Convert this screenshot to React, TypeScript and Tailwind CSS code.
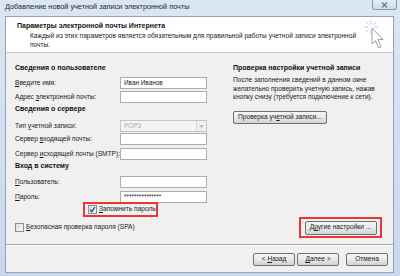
import React from "react";

function Btn({ children, className = "" }: { children: React.ReactNode; className?: string }) {
  return (
    <div
      className={`flex h-[13px] items-center justify-center whitespace-nowrap rounded-[2px] border border-[#707070] bg-linear-to-b from-[#f6f6f6] via-[#e9e9e9] to-[#d3d3d3] text-[6.6px] leading-none text-[#1a1a1a] ${className}`}
    >
      {children}
    </div>
  );
}

function Field({ label, value, disabled }: { label: React.ReactNode; value?: string; disabled?: boolean }) {
  return (
    <div className="flex h-[12px] items-center">
      <div className="w-[105px] whitespace-nowrap text-[6.6px] leading-none text-[#1a1a1a]">{label}</div>
      {disabled ? (
        <div className="flex h-full w-[87px] items-center border border-[#bcc6d2] bg-[#f4f4f4]">
          <span className="flex-1 pl-[3px] text-[6.4px] leading-none text-[#a8a8a8]">{value}</span>
          <div className="flex h-full w-[10px] items-center justify-center border-l border-[#d4d9df] bg-[#eef0f2]">
            <svg width="5" height="3" viewBox="0 0 5 3">
              <path d="M0 0 L5 0 L2.5 3 Z" fill="#b8b8b8" />
            </svg>
          </div>
        </div>
      ) : (
        <div className="flex h-full w-[87px] items-center border border-[#abadb3] bg-white pl-[3px] text-[6.4px] leading-none text-[#1a1a1a]">
          {value}
        </div>
      )}
    </div>
  );
}

function Check({ checked }: { checked?: boolean }) {
  return (
    <div className="flex h-[9px] w-[9px] shrink-0 items-center justify-center border border-[#8e8f8f] bg-linear-to-br from-[#dcdcdc] to-[#fbfbfb]">
      {checked && (
        <svg width="7" height="7" viewBox="0 0 7 7">
          <path d="M1 3.6 L2.8 5.6 L6 1" stroke="#2a3f7a" strokeWidth="1.3" fill="none" />
        </svg>
      )}
    </div>
  );
}

function U({ children }: { children: React.ReactNode }) {
  return <span className="underline underline-offset-1">{children}</span>;
}

export default function App() {
  return (
    <div className="flex h-[276px] w-[400px] flex-col overflow-hidden bg-linear-to-b from-[#dbe6f3] to-[#c9d8ea] font-['Liberation_Sans',Arial,sans-serif]">
      {/* title bar */}
      <div className="flex h-[16px] items-start">
        <div className="whitespace-nowrap pl-[5px] pt-[2px] text-[7.3px] leading-[9px] text-[#1e2530]">
          Добавление новой учетной записи электронной почты
        </div>
        <div className="ml-auto mr-[3px] flex h-[10px] w-[25px] items-center justify-center rounded-b-[3px] border border-t-0 border-[#8a9ab0] bg-linear-to-b from-[#e6edf5] to-[#cfdae8]">
          <svg width="7" height="6" viewBox="0 0 7 6">
            <path d="M1 0.5 L6 5.5 M6 0.5 L1 5.5" stroke="#6b7688" strokeWidth="1.2" />
          </svg>
        </div>
      </div>

      {/* client area */}
      <div className="ml-[5px] mr-[6px] flex flex-1 flex-col border border-[#91a4bd] bg-[#f0f0f0]">
        {/* header */}
        <div className="relative h-[36px] border-b border-[#c9c9c9] bg-white pl-[11px] pt-[4px]">
          <div className="h-[10px] whitespace-nowrap text-[7px] font-bold leading-[10px] text-[#111]">
            Параметры электронной почты Интернета
          </div>
          <div className="whitespace-nowrap pl-[13px] text-[6.6px] leading-[9px] text-[#222]">
            Каждый из этих параметров является обязательным для правильной работы учетной записи электронной
            <br />
            почты.
          </div>
          <svg className="absolute right-[6px] top-[2px]" width="24" height="32" viewBox="0 0 24 32">
            <g stroke="#c8ccd2" strokeWidth="1">
              <path d="M8 1 V6 M8 11 V15 M1 8 H5 M11 8 H15 M3 3 L5.5 5.5 M13 3 L10.5 5.5 M3 13 L5.5 10.5" />
            </g>
            <path
              d="M9 9 L9 25 L12.5 21.5 L15.5 29 L18 28 L15 20.5 L20 20.5 Z"
              fill="#ffffff"
              stroke="#9aa0a8"
              strokeWidth="1"
              strokeLinejoin="round"
            />
          </svg>
        </div>

        {/* body */}
        <div className="flex flex-1 pl-[9px] pr-[11px]">
          {/* left column */}
          <div className="flex w-[192px] flex-col">
            <div className="mt-[10px] h-[10px] whitespace-nowrap text-[7px] font-bold leading-[10px] text-[#111]">
              Сведения о пользователе
            </div>
            <div className="mt-[4px]">
              <Field label={<><U>В</U>ведите имя:</>} value="Иван Иванов" />
            </div>
            <div className="mt-[2px]">
              <Field label={<>Адрес <U>э</U>лектронной почты:</>} />
            </div>
            <div className="mt-[1px] h-[10px] whitespace-nowrap text-[7px] font-bold leading-[10px] text-[#111]">
              Сведения о сервере
            </div>
            <div className="mt-[6px]">
              <Field label={<>Тип <U>у</U>четной записи:</>} value="POP3" disabled />
            </div>
            <div className="mt-[1px]">
              <Field label={<>Сервер <U>в</U>ходящей почты:</>} />
            </div>
            <div className="mt-[3px]">
              <Field label={<>Сервер <U>и</U>сходящей почты (SMTP):</>} />
            </div>
            <div className="mt-[1px] h-[10px] whitespace-nowrap text-[7px] font-bold leading-[10px] text-[#111]">
              Вход в систему
            </div>
            <div className="mt-[5px]">
              <Field label={<><U>П</U>ользователь:</>} />
            </div>
            <div className="mt-[3px]">
              <Field label={<><U>П</U>ароль:</>} value="***************" />
            </div>
            <div className="-mt-px ml-[68px] flex h-[15px] w-[75px] items-center gap-[2px] border-2 border-[#ee3535] pl-[3px]">
              <Check checked />
              <span className="whitespace-nowrap text-[6.6px] leading-none text-[#1a1a1a]">
                <U>З</U>апомнить пароль
              </span>
            </div>
            <div className="mt-[5px] flex h-[10px] items-center gap-[2px]">
              <Check />
              <span className="whitespace-nowrap text-[6.6px] leading-none text-[#1a1a1a]">
                <U>Б</U>езопасная проверка пароля (SPA)
              </span>
            </div>
          </div>

          {/* right column */}
          <div className="ml-[26px] flex flex-1 flex-col">
            <div className="mt-[10px] h-[10px] whitespace-nowrap text-[7px] font-bold leading-[10px] text-[#111]">
              Проверка настройки учетной записи
            </div>
            <div className="mt-[3px] whitespace-nowrap text-[6.6px] leading-[8.7px] text-[#222]">
              После заполнения сведений в данном окне
              <br />
              желательно проверить учетную запись, нажав
              <br />
              кнопку снизу (требуется подключение к сети).
            </div>
            <Btn className="mt-[9px] w-[94px]">
              <span>
                Проверка уч<U>е</U>тной записи...
              </span>
            </Btn>
            <div className="mt-auto mb-[6px] flex justify-end">
              <div className="flex h-[21px] w-[83px] items-center justify-center border-2 border-[#ee3535]">
                <Btn className="h-[14px] w-[72px]">
                  <span>
                    Д<U>р</U>угие настройки ...
                  </span>
                </Btn>
              </div>
            </div>
          </div>
        </div>

        {/* footer */}
        <div className="flex h-[28px] items-start justify-end border-t border-[#a9a9a9] pr-[5px] pt-[8px] shadow-[inset_0_1px_0_#ffffff]">
          <Btn className="w-[42px]">
            <span>
              &lt; <U>Н</U>азад
            </span>
          </Btn>
          <Btn className="ml-[2px] w-[42px]">
            <span>
              <U>Д</U>алее &gt;
            </span>
          </Btn>
          <Btn className="ml-[7px] w-[42px]">Отмена</Btn>
        </div>
      </div>
      <div className="h-[3px]" />
    </div>
  );
}
